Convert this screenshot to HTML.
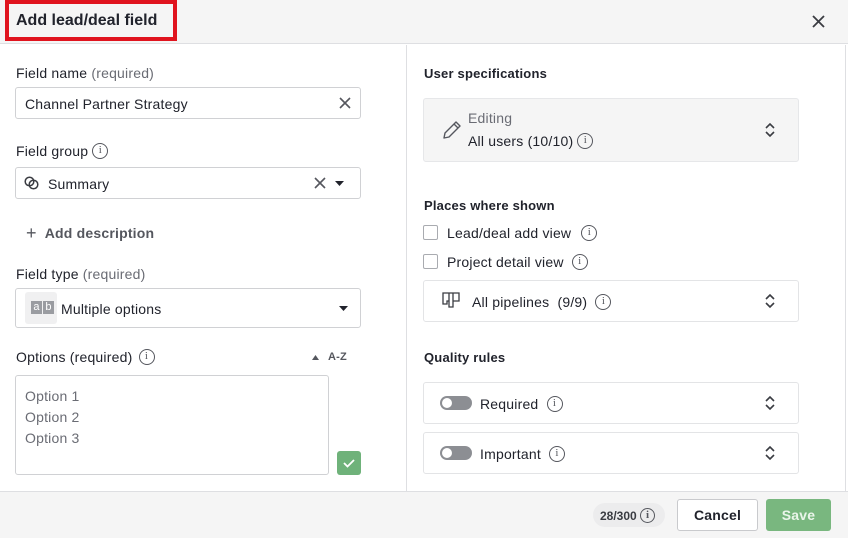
<!DOCTYPE html>
<html><head><meta charset="utf-8"><style>
*{box-sizing:border-box;margin:0;padding:0}
body{width:848px;height:538px;overflow:hidden;background:#fff;font-family:"Liberation Sans",sans-serif;color:#21232c;position:relative;font-size:14px;letter-spacing:0.2px}
.a{position:absolute}
.lbl{font-size:14px;color:#21232c}
.lbl span{color:#6a6c74}
.box{position:absolute;border:1px solid #d0d1d4;border-radius:3px;background:#fff}
.sec{font-size:13px;font-weight:bold;color:#21232c}
.info{display:inline-block;width:16px;height:16px;border:1.4px solid #55575e;border-radius:50%;vertical-align:-3px;position:relative}
.info:after{content:"i";position:absolute;left:0;right:0;top:0;text-align:center;font-size:11px;line-height:13px;color:#55575e;font-family:"Liberation Serif",serif}
.chev{position:absolute;width:12px;height:16px}
.cb{position:absolute;width:15px;height:15px;border:1px solid #a9abb0;border-radius:2px;background:#fff}
.tog{position:absolute;width:32px;height:14px;border-radius:7px;background:#8c8e93}
.tog:after{content:"";position:absolute;left:2px;top:2px;width:10px;height:10px;border-radius:50%;background:#fff}
</style></head><body>
<div class="a" style="left:0;top:0;width:848px;height:44px;background:#f5f5f5;border-bottom:1px solid #dedfe2"></div>
<div class="a" style="left:5px;top:0;width:172px;height:41px;border:4px solid #e0141e"></div>
<div class="a" style="left:16px;top:12px;font-size:16px;font-weight:bold;letter-spacing:0">Add lead/deal field</div>
<svg class="a" style="left:812px;top:15px" width="13" height="13"><path d="M1 1L12 12M12 1L1 12" stroke="#3a3c42" stroke-width="1.8"/></svg>
<div class="a" style="left:406px;top:45px;width:1px;height:446px;background:#dedfe2"></div>
<div class="a" style="left:845px;top:45px;width:1px;height:446px;background:#dedfe2"></div>

<div class="a lbl" style="left:16px;top:65px">Field name <span>(required)</span></div>
<div class="box" style="left:15px;top:87px;width:346px;height:32px"></div>
<div class="a" style="left:25px;top:96px">Channel Partner Strategy</div>
<svg class="a" style="left:339px;top:97px" width="12" height="12"><path d="M1 1L11 11M11 1L1 11" stroke="#55575e" stroke-width="1.6"/></svg>

<div class="a lbl" style="left:16px;top:143px">Field group <span class="info"></span></div>
<div class="box" style="left:15px;top:167px;width:346px;height:32px"></div>
<svg class="a" style="left:24px;top:176px" width="16" height="14"><circle cx="5.5" cy="5.5" r="4.3" fill="none" stroke="#3a3c42" stroke-width="1.5"/><circle cx="9.5" cy="8.5" r="4.3" fill="none" stroke="#3a3c42" stroke-width="1.5"/></svg>
<div class="a" style="left:48px;top:176px">Summary</div>
<svg class="a" style="left:314px;top:177px" width="12" height="12"><path d="M1 1L11 11M11 1L1 11" stroke="#55575e" stroke-width="1.6"/></svg>
<svg class="a" style="left:335px;top:181px" width="9" height="5"><path d="M0 0H9L4.5 5Z" fill="#21232c"/></svg>

<div class="a" style="left:26px;top:223px;font-size:14px;color:#55575e;font-weight:bold"><span style="font-weight:normal;font-size:18px;margin-right:8px;vertical-align:-1px">+</span>Add description</div>

<div class="a lbl" style="left:16px;top:266px">Field type <span>(required)</span></div>
<div class="box" style="left:15px;top:288px;width:346px;height:40px"></div>
<div class="a" style="left:25px;top:292px;width:32px;height:32px;background:#f0f0f1;border-radius:3px"></div>
<div class="a" style="left:31px;top:301px;width:11px;height:13px;background:#9a9ca1;color:#fff;font-size:11px;text-align:center;line-height:12px">a</div>
<div class="a" style="left:43px;top:301px;width:11px;height:13px;background:#9a9ca1;color:#fff;font-size:11px;text-align:center;line-height:12px">b</div>
<div class="a" style="left:61px;top:301px">Multiple options</div>
<svg class="a" style="left:339px;top:306px" width="9" height="5"><path d="M0 0H9L4.5 5Z" fill="#21232c"/></svg>

<div class="a lbl" style="left:16px;top:349px">Options (required) <span class="info" style="margin-left:2px"></span></div>
<svg class="a" style="left:312px;top:355px" width="7" height="5"><path d="M0 5H7L3.5 0Z" fill="#55575e"/></svg>
<div class="a" style="left:328px;top:351px;font-size:11px;font-weight:bold;color:#55575e">A-Z</div>
<div class="box" style="left:15px;top:375px;width:314px;height:100px"></div>
<div class="a" style="left:25px;top:386px;color:#6a6c74;line-height:21px">Option 1<br>Option 2<br>Option 3</div>
<div class="a" style="left:337px;top:451px;width:24px;height:24px;background:#6fb27a;border-radius:3px"></div>
<svg class="a" style="left:342px;top:457px" width="14" height="12"><path d="M2 6L5.5 9.5L12 3" stroke="#fff" stroke-width="1.8" fill="none"/></svg>

<div class="a sec" style="left:424px;top:66px">User specifications</div>
<div class="a" style="left:423px;top:98px;width:376px;height:64px;background:#f5f5f5;border:1px solid #e6e7e9;border-radius:3px"></div>
<svg class="a" style="left:441px;top:119px" width="22" height="22"><path d="M3 19L4 14L15 3L19 7L8 18Z M13 5L17 9" stroke="#55575e" stroke-width="1.4" fill="none" stroke-linejoin="round"/></svg>
<div class="a" style="left:468px;top:110px;color:#6a6c74">Editing</div>
<div class="a" style="left:468px;top:133px">All users (10/10) <span class="info"></span></div>
<svg class="chev" style="left:764px;top:122px" viewBox="0 0 12 16"><path d="M2 6L6 2L10 6M2 10L6 14L10 10" stroke="#3a3c42" stroke-width="1.6" fill="none"/></svg>

<div class="a sec" style="left:424px;top:198px">Places where shown</div>
<div class="cb" style="left:423px;top:225px"></div>
<div class="a" style="left:447px;top:225px">Lead/deal add view <span class="info" style="margin-left:6px"></span></div>
<div class="cb" style="left:423px;top:254px"></div>
<div class="a" style="left:447px;top:254px">Project detail view <span class="info" style="margin-left:4px"></span></div>
<div class="box" style="left:423px;top:280px;width:376px;height:42px;border-color:#e3e4e6"></div>
<svg class="a" style="left:442px;top:292px" width="18" height="18"><path d="M1 1H17V9H11V15H7V9H5V12H1Z M7 1V9 M11 1V9" stroke="#3a3c42" stroke-width="1.3" fill="none"/></svg>
<div class="a" style="left:472px;top:294px">All pipelines &nbsp;(9/9) &nbsp;<span class="info"></span></div>
<svg class="chev" style="left:764px;top:293px" viewBox="0 0 12 16"><path d="M2 6L6 2L10 6M2 10L6 14L10 10" stroke="#3a3c42" stroke-width="1.6" fill="none"/></svg>

<div class="a sec" style="left:424px;top:350px">Quality rules</div>
<div class="box" style="left:423px;top:382px;width:376px;height:42px;border-color:#e3e4e6"></div>
<div class="tog" style="left:440px;top:396px"></div>
<div class="a" style="left:480px;top:396px">Required <span class="info" style="margin-left:4px"></span></div>
<svg class="chev" style="left:764px;top:395px" viewBox="0 0 12 16"><path d="M2 6L6 2L10 6M2 10L6 14L10 10" stroke="#3a3c42" stroke-width="1.6" fill="none"/></svg>
<div class="box" style="left:423px;top:432px;width:376px;height:42px;border-color:#e3e4e6"></div>
<div class="tog" style="left:440px;top:446px"></div>
<div class="a" style="left:480px;top:446px">Important <span class="info" style="margin-left:4px"></span></div>
<svg class="chev" style="left:764px;top:445px" viewBox="0 0 12 16"><path d="M2 6L6 2L10 6M2 10L6 14L10 10" stroke="#3a3c42" stroke-width="1.6" fill="none"/></svg>

<div class="a" style="left:0;top:491px;width:848px;height:47px;background:#f5f5f5;border-top:1px solid #dedfe2"></div>
<div class="a" style="left:593px;top:503px;width:72px;height:24px;background:#ececed;border-radius:12px"></div>
<div class="a" style="left:600px;top:508px;font-size:12px;font-weight:bold;color:#3a3c42;letter-spacing:0">28/300 <span class="info" style="width:15px;height:15px"></span></div>
<div class="a" style="left:677px;top:499px;width:81px;height:32px;background:#fff;border:1px solid #c9cacd;border-radius:3px;text-align:center;line-height:30px;font-weight:bold;font-size:14px">Cancel</div>
<div class="a" style="left:766px;top:499px;width:65px;height:32px;background:#79b77f;border-radius:3px;text-align:center;line-height:32px;font-weight:bold;font-size:14px;color:#eaf5ea">Save</div>
</body></html>
